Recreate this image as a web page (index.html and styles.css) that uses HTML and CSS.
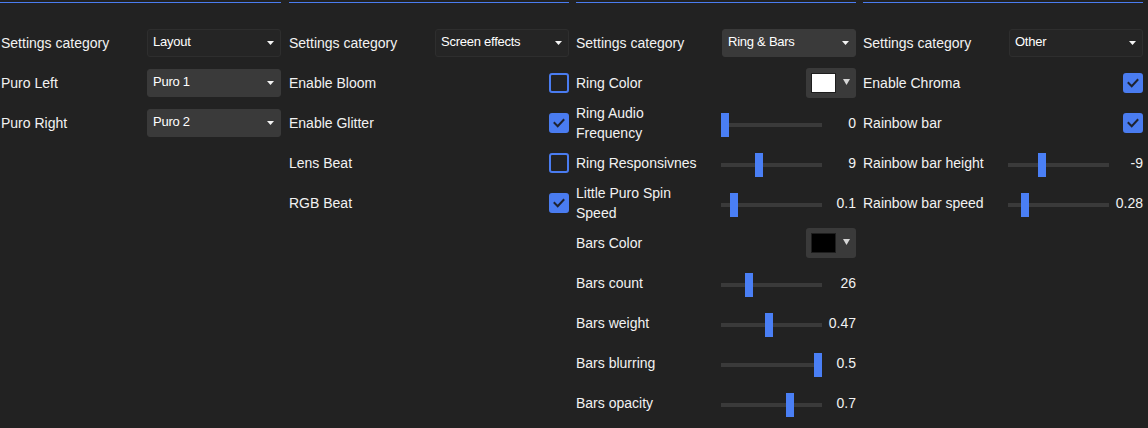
FILE: index.html
```html
<!DOCTYPE html>
<html>
<head>
<meta charset="utf-8">
<link rel="stylesheet" href="styles.css">
</head>
<body>
<div class="panel">
  <section class="col col-first">
    <div class="rule"></div>
    <div class="row"><span class="label">Settings category</span><div class="select dark"><span>Layout</span><svg class="caret" width="7" height="4" viewBox="0 0 7 4"><polygon points="0,0 7,0 3.5,4"/></svg></div></div>
    <div class="row"><span class="label">Puro Left</span><div class="select light"><span>Puro 1</span><svg class="caret" width="7" height="4" viewBox="0 0 7 4"><polygon points="0,0 7,0 3.5,4"/></svg></div></div>
    <div class="row"><span class="label">Puro Right</span><div class="select light"><span>Puro 2</span><svg class="caret" width="7" height="4" viewBox="0 0 7 4"><polygon points="0,0 7,0 3.5,4"/></svg></div></div>
  </section>

  <section class="col">
    <div class="rule"></div>
    <div class="row"><span class="label">Settings category</span><div class="select dark"><span>Screen effects</span><svg class="caret" width="7" height="4" viewBox="0 0 7 4"><polygon points="0,0 7,0 3.5,4"/></svg></div></div>
    <div class="row"><span class="label">Enable Bloom</span><span class="check"></span></div>
    <div class="row"><span class="label">Enable Glitter</span><span class="check on"><svg width="16" height="16" viewBox="0 0 16 16"><polyline points="3.5,8 6.7,11.2 12.5,5"/></svg></span></div>
    <div class="row"><span class="label">Lens Beat</span><span class="check"></span></div>
    <div class="row"><span class="label">RGB Beat</span><span class="check on"><svg width="16" height="16" viewBox="0 0 16 16"><polyline points="3.5,8 6.7,11.2 12.5,5"/></svg></span></div>
  </section>

  <section class="col">
    <div class="rule"></div>
    <div class="row"><span class="label">Settings category</span><div class="select light"><span>Ring &amp; Bars</span><svg class="caret" width="7" height="4" viewBox="0 0 7 4"><polygon points="0,0 7,0 3.5,4"/></svg></div></div>
    <div class="row"><span class="label">Ring Color</span><div class="color"><span class="swatch white"></span><svg class="tri" width="7" height="6" viewBox="0 0 7 6"><polygon points="0,0 7,0 3.5,6"/></svg></div></div>
    <div class="row"><span class="label">Ring Audio Frequency</span><div class="slider"><span class="track"></span><span class="thumb" style="--p:0"></span></div><span class="value">0</span></div>
    <div class="row"><span class="label">Ring Responsivnes</span><div class="slider"><span class="track"></span><span class="thumb" style="--p:0.366"></span></div><span class="value">9</span></div>
    <div class="row"><span class="label">Little Puro Spin Speed</span><div class="slider"><span class="track"></span><span class="thumb" style="--p:0.097"></span></div><span class="value">0.1</span></div>
    <div class="row"><span class="label">Bars Color</span><div class="color"><span class="swatch black"></span><svg class="tri" width="7" height="6" viewBox="0 0 7 6"><polygon points="0,0 7,0 3.5,6"/></svg></div></div>
    <div class="row"><span class="label">Bars count</span><div class="slider"><span class="track"></span><span class="thumb" style="--p:0.258"></span></div><span class="value">26</span></div>
    <div class="row"><span class="label">Bars weight</span><div class="slider"><span class="track"></span><span class="thumb" style="--p:0.473"></span></div><span class="value">0.47</span></div>
    <div class="row"><span class="label">Bars blurring</span><div class="slider"><span class="track"></span><span class="thumb" style="--p:1"></span></div><span class="value">0.5</span></div>
    <div class="row"><span class="label">Bars opacity</span><div class="slider"><span class="track"></span><span class="thumb" style="--p:0.699"></span></div><span class="value">0.7</span></div>
  </section>

  <section class="col">
    <div class="rule"></div>
    <div class="row"><span class="label">Settings category</span><div class="select dark"><span>Other</span><svg class="caret" width="7" height="4" viewBox="0 0 7 4"><polygon points="0,0 7,0 3.5,4"/></svg></div></div>
    <div class="row"><span class="label">Enable Chroma</span><span class="check on"><svg width="16" height="16" viewBox="0 0 16 16"><polyline points="3.5,8 6.7,11.2 12.5,5"/></svg></span></div>
    <div class="row"><span class="label">Rainbow bar</span><span class="check on"><svg width="16" height="16" viewBox="0 0 16 16"><polyline points="3.5,8 6.7,11.2 12.5,5"/></svg></span></div>
    <div class="row"><span class="label">Rainbow bar height</span><div class="slider"><span class="track"></span><span class="thumb" style="--p:0.32"></span></div><span class="value">-9</span></div>
    <div class="row"><span class="label">Rainbow bar speed</span><div class="slider"><span class="track"></span><span class="thumb" style="--p:0.14"></span></div><span class="value">0.28</span></div>
  </section>
</div>
</body>
</html>
```

FILE: styles.css
```css
html, body {
  margin: 0;
  padding: 0;
  background: #222222;
}

body {
  width: 1148px;
  height: 428px;
  overflow: hidden;
  font-family: "Liberation Sans", Arial, sans-serif;
  color: #f2f2f2;
  font-size: 14px;
}

.panel {
  display: grid;
  grid-template-columns: repeat(4, 287px);
}

.col {
  padding: 2px 5px 0 2px;
  display: flex;
  flex-direction: column;
}

.col-first {
  padding-left: 1px;
  padding-right: 6px;
}

.rule {
  height: 1px;
  background: #4a7cf0;
  margin-bottom: 20px;
}

.col-first .rule {
  margin-left: -1px;
}

.row {
  display: flex;
  align-items: center;
  height: 40px;
}

.label {
  width: 145px;
  flex: 0 0 145px;
  box-sizing: border-box;
  padding-right: 12px;
  line-height: 20px;
}

.select {
  margin-left: 1px;
  width: 134px;
  height: 28px;
  box-sizing: border-box;
  border-radius: 3px;
  padding: 4px 6px 0 5px;
  display: flex;
  justify-content: space-between;
  align-items: flex-start;
  font-size: 13px;
  letter-spacing: -0.25px;
  line-height: 15px;
  color: #ffffff;
}

.select.dark {
  background: #252525;
  border: 1px solid #2e2e2e;
}

.select.light {
  background: #3a3a3a;
  border: 1px solid #3a3a3a;
}

.caret {
  margin-top: 7px;
  fill: #f4f4f4;
}

.check {
  margin-left: auto;
  width: 20px;
  height: 20px;
  box-sizing: border-box;
  border: 2px solid #4a7cf0;
  border-radius: 3px;
  display: flex;
  align-items: center;
  justify-content: center;
}

.check.on {
  background: #4a7cf0;
}

.check svg polyline {
  fill: none;
  stroke: #1f2330;
  stroke-width: 2;
  stroke-linecap: square;
}

.color {
  margin-left: auto;
  width: 50px;
  height: 30px;
  box-sizing: border-box;
  background: #3a3a3a;
  border-radius: 3px;
  padding-left: 5px;
  display: flex;
  align-items: center;
}

.swatch {
  width: 25px;
  height: 20px;
  box-sizing: border-box;
  border: 1px solid #1e1e1e;
}

.swatch.white {
  background: #ffffff;
}

.swatch.black {
  background: #000000;
}

.tri {
  margin-left: 7px;
  margin-top: -2px;
  fill: #d6d6d6;
}

.slider {
  position: relative;
  width: 101px;
  height: 24px;
  margin-top: 4px;
  flex: 0 0 101px;
}

.track {
  position: absolute;
  left: 0;
  right: 0;
  top: 10px;
  height: 4px;
  background: #3a3a3a;
}

.thumb {
  position: absolute;
  top: 0;
  left: calc(var(--p) * 93px);
  width: 8px;
  height: 24px;
  background: #4a7ff5;
}

.value {
  width: 34px;
  text-align: right;
  line-height: 20px;
}
```
